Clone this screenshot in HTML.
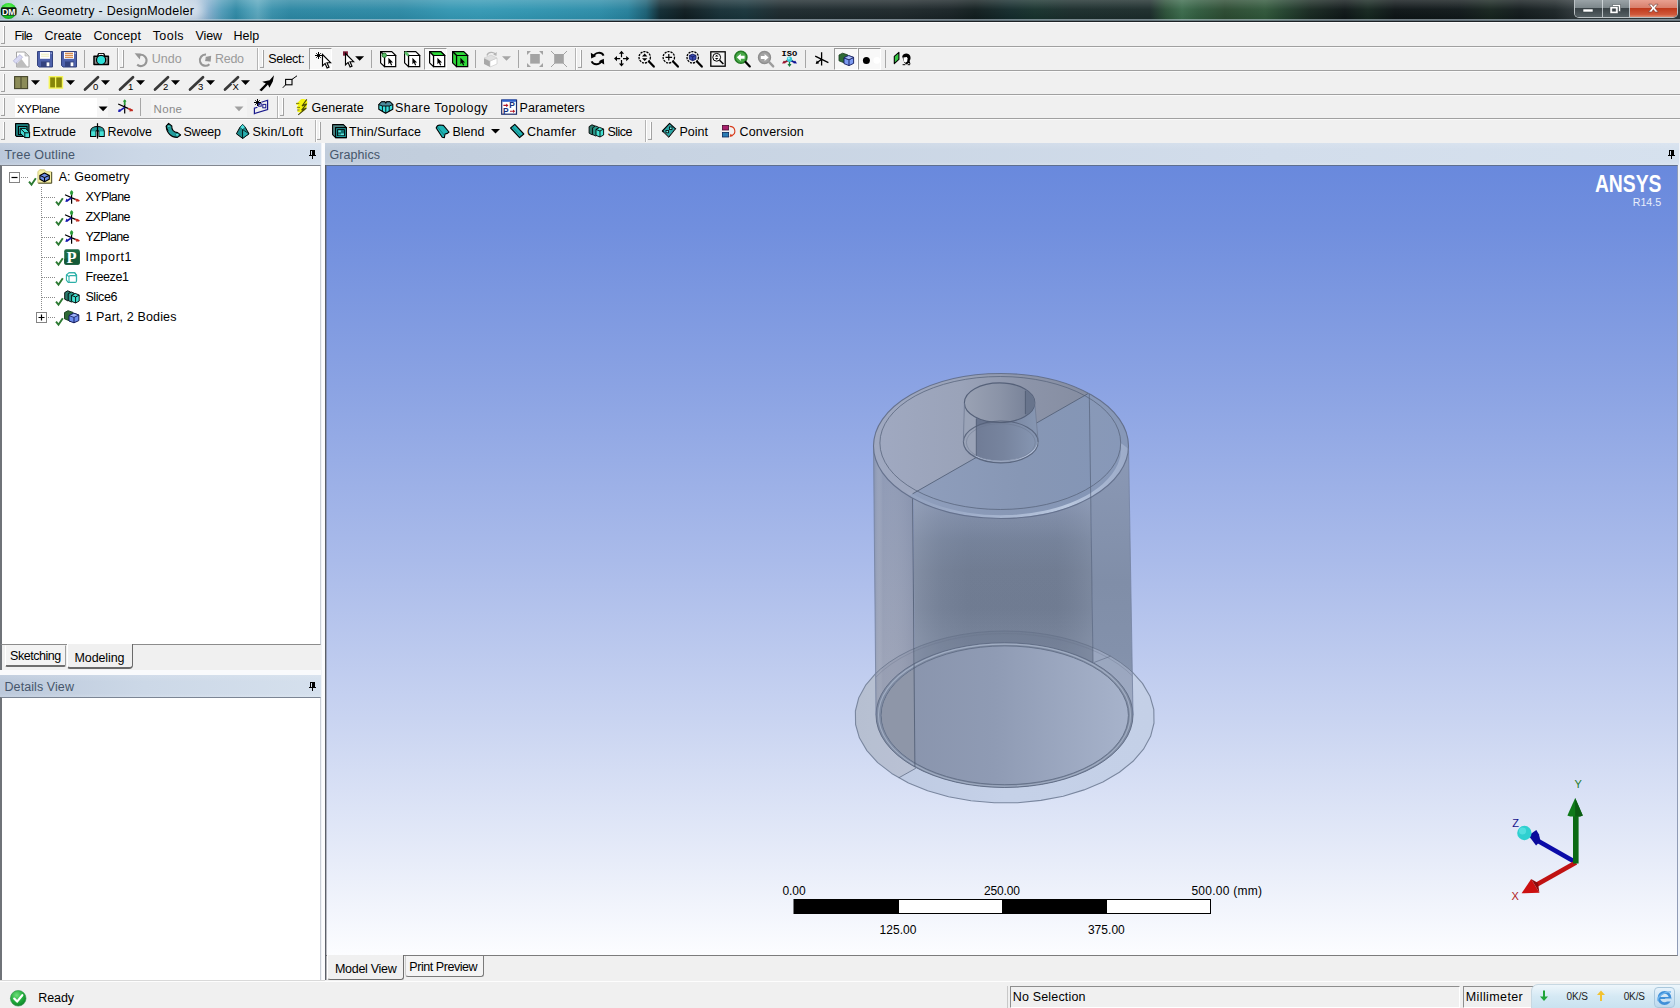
<!DOCTYPE html>
<html lang="en">
<head>
<meta charset="utf-8">
<title>A: Geometry - DesignModeler</title>
<style>
html,body{margin:0;padding:0;}
body{width:1680px;height:1008px;overflow:hidden;background:#f0f0f0;font-family:"Liberation Sans",sans-serif;position:relative;}
#app{position:absolute;left:0;top:0;width:1680px;height:1008px;overflow:hidden;background:#f0f0f0;}
.t{position:absolute;white-space:pre;line-height:16px;height:16px;font-family:"Liberation Sans",sans-serif;}
.a{position:absolute;}
.hl{position:absolute;left:0;width:1680px;height:1px;}
.grip{position:absolute;width:4px;height:18px;border-right:1px solid #a2a2a2;border-bottom:1px solid #a2a2a2;box-sizing:border-box;}
.grip:before{content:"";position:absolute;right:0;top:0;width:1px;height:16px;background:#fff;}
.vsep{position:absolute;width:1px;height:18px;background:#a6a6a6;}
.tbend{position:absolute;width:1px;height:22px;background:#b4b4b4;box-shadow:1px 0 0 #fff;}
.pressed{position:absolute;box-sizing:border-box;border:1px solid;border-color:#9a9a9a #fff #fff #9a9a9a;background:#f8f8f8;}
.phead{position:absolute;height:22px;background:linear-gradient(180deg,rgba(255,255,255,.12),rgba(255,255,255,0) 30%,rgba(255,255,255,0) 85%,rgba(255,255,255,.15)),linear-gradient(90deg,#bcc9db 0%,#ccd8e7 45%,#d5e0ed 100%);}
.white{position:absolute;background:#fff;}
svg{position:absolute;overflow:visible;}
</style>
</head>
<body>
<div id="app">
<!-- ===== title bar (aero glass over wallpaper) ===== -->
<div class="a" id="titlebar" style="left:0;top:0;width:1680px;height:21px;background:
 linear-gradient(180deg,rgba(255,255,255,.2) 0%,rgba(255,255,255,.04) 45%,rgba(0,0,0,.05) 100%),
 linear-gradient(90deg,#a9c3ce 0px,#c0d2dc 14px,#c9d8e1 90px,#c6d6e0 170px,#b3c6dc 196px,#86b0cf 208px,#4f9bb8 222px,#2d88a4 236px,#4a9db6 250px,#5aa6bd 258px,#3790ab 272px,#2a86a2 290px,#2b89a5 400px,#3296b2 450px,#3398b4 480px,#2f94b0 530px,#2b8ca8 600px,#247f9a 628px,#1a5f74 646px,#0f2a32 660px,#0d1a1e 685px,#152e35 720px,#17333a 745px,#1b282c 780px,#1c2629 900px,#172124 950px,#0f1b1c 975px,#12292a 1010px,#15302b 1035px,#192b2a 1070px,#1a2a29 1150px,#2a5037 1166px,#39694a 1182px,#2f5a3d 1198px,#29482f 1225px,#2e5538 1265px,#21402c 1285px,#16271f 1310px,#0c1415 1345px,#13241d 1368px,#0b1214 1395px,#0e1618 1460px,#14221c 1490px,#10181a 1520px,#1a2325 1555px,#2b3437 1573px,#30393c 1680px);"></div>
<div class="a" style="left:14px;top:2px;width:190px;height:17px;border-radius:9px;background:rgba(235,242,247,.55);filter:blur(5px)"></div>
<div class="hl" style="top:19px;background:rgba(200,215,225,.55)"></div>
<div class="hl" style="top:20px;background:rgba(120,135,145,.8)"></div>
<div class="hl" style="top:21px;background:#1d2226"></div>
<div class="hl" style="top:22px;background:#fbfbfb"></div>
<!-- window buttons -->
<div class="a" style="left:1574px;top:0;width:104px;height:18px;border:1px solid rgba(235,240,245,.75);border-top:none;border-radius:0 0 5px 5px;box-sizing:border-box;background:#30383b;overflow:hidden">
  <div class="a" style="left:0;top:0;width:27px;height:17px;background:linear-gradient(180deg,#9aa3a7 0%,#7d878b 45%,#3a4347 50%,#566064 100%);border-right:1px solid rgba(230,235,240,.7)"></div>
  <div class="a" style="left:28px;top:0;width:26px;height:17px;background:linear-gradient(180deg,#9aa3a7 0%,#7d878b 45%,#3a4347 50%,#566064 100%);border-right:1px solid rgba(230,235,240,.7)"></div>
  <div class="a" style="left:55px;top:0;width:48px;height:17px;background:linear-gradient(180deg,#e8a090 0%,#d9806c 45%,#c03a1c 50%,#d0583a 85%,#e08c70 100%)"></div>
</div>
<svg style="left:1574px;top:0" width="104" height="18" viewBox="0 0 104 18">
  <rect x="9" y="9" width="10" height="3" fill="#fff" stroke="#3b4347" stroke-width=".6"/>
  <path d="M38.5 4.5h8v7h-2v-5h-6z" fill="#fff" stroke="#3b4347" stroke-width=".5"/>
  <path d="M36 6.5h8v7h-8z M38.3 8.8v2.5h3.4v-2.5z" fill="#fff" fill-rule="evenodd" stroke="#3b4347" stroke-width=".5"/>
  <path d="M74.800 4.200l2.900 0 1.700 2.300 1.700-2.300 2.900 0-3.100 3.800 3.300 4-3 0-1.800-2.400-1.800 2.400-3 0 3.300-4z" fill="#fff" stroke="#6b3a36" stroke-width=".6"/>
</svg>
<!-- DM icon -->
<svg style="left:0;top:2px" width="18" height="18" viewBox="0 0 18 18">
  <defs><radialGradient id="dmg" cx=".5" cy=".35" r=".7"><stop offset="0" stop-color="#7dff6a"/><stop offset=".6" stop-color="#22d62a"/><stop offset="1" stop-color="#0c9a1c"/></radialGradient></defs>
  <circle cx="8.5" cy="9" r="8" fill="url(#dmg)"/>
  <rect x="1" y="5.2" width="15.5" height="8.4" rx="1.5" fill="#0a1a0a"/>
  <text x="8.7" y="12.6" font-family="Liberation Sans, sans-serif" font-weight="bold" font-size="8.6" fill="#fff" text-anchor="middle" textLength="13.5" lengthAdjust="spacingAndGlyphs">DM</text>
</svg>

<!-- ===== menu + toolbars separators ===== -->
<div class="hl" style="top:46px;background:#a0a0a0"></div><div class="hl" style="top:47px;background:#fafafa"></div>
<div class="hl" style="top:70px;background:#a0a0a0"></div><div class="hl" style="top:71px;background:#fafafa"></div>
<div class="hl" style="top:94px;background:#a0a0a0"></div><div class="hl" style="top:95px;background:#fafafa"></div>
<div class="hl" style="top:118px;background:#a0a0a0"></div><div class="hl" style="top:119px;background:#fafafa"></div>

<!-- grippers -->
<div class="grip" style="left:1px;top:26px"></div>
<div class="grip" style="left:1px;top:50px"></div>
<div class="grip" style="left:120px;top:50px"></div>
<div class="grip" style="left:260px;top:50px"></div>
<div class="grip" style="left:578px;top:50px"></div>
<div class="grip" style="left:1px;top:74px"></div>
<div class="grip" style="left:1px;top:98px"></div>
<div class="grip" style="left:280px;top:98px"></div>
<div class="grip" style="left:1px;top:122px"></div>
<div class="grip" style="left:317px;top:122px"></div>
<div class="grip" style="left:648px;top:122px"></div>
<!-- toolbar ends -->
<div class="tbend" style="left:117px;top:48px"></div>
<div class="tbend" style="left:257px;top:48px"></div>
<div class="tbend" style="left:575px;top:48px"></div>
<div class="tbend" style="left:277px;top:96px"></div>
<div class="tbend" style="left:315px;top:120px"></div>
<div class="tbend" style="left:645px;top:120px"></div>
<!-- small separators -->
<div class="vsep" style="left:84px;top:50px"></div>
<div class="vsep" style="left:371px;top:50px"></div>
<div class="vsep" style="left:475px;top:50px"></div>
<div class="vsep" style="left:518px;top:50px"></div>
<div class="vsep" style="left:805px;top:50px"></div>
<div class="vsep" style="left:885px;top:50px"></div>
<div class="vsep" style="left:140px;top:98px"></div>
<!-- pressed buttons -->
<div class="pressed" style="left:309px;top:48px;width:23px;height:22px"></div>
<div class="pressed" style="left:424px;top:48px;width:23px;height:22px"></div>
<div class="pressed" style="left:834px;top:48px;width:24px;height:22px"></div>
<div class="pressed" style="left:858px;top:48px;width:23px;height:22px"></div>
<!-- combos -->
<div class="white" style="left:15px;top:98px;width:82px;height:19px"></div>
<div class="a" style="left:97px;top:98px;width:11px;height:19px;background:#f6f6f6"></div>
<div class="a" style="left:151px;top:98px;width:96px;height:19px;background:#f4f4f4"></div>

<!-- ===== panels ===== -->
<div class="a" style="left:0;top:143px;width:1680px;height:838px;background:#eef2f8"></div>
<div class="phead" style="left:0;top:143px;width:321px"></div>
<div class="phead" style="left:325px;top:143px;width:1354px;background:linear-gradient(180deg,rgba(255,255,255,.12),rgba(255,255,255,0) 30%,rgba(255,255,255,0) 85%,rgba(255,255,255,.15)),linear-gradient(90deg,#c0ccdb 0%,#c7d3e2 25%,#d2ddeb 70%,#d6e1ee 100%)"></div>
<div class="a" style="left:321px;top:143px;width:4px;height:838px;background:linear-gradient(90deg,#e9edf3,#fdfdfe 35%,#fafbfd)"></div>
<!-- tree panel -->
<div class="a" style="left:0;top:165px;width:321px;height:480px;background:#fff;border:1px solid #828790;border-left:2px solid #6f7378;border-right-color:#c9ced6;border-bottom-color:#8c8c8c;box-sizing:border-box"></div>
<div class="a" style="left:0;top:645px;width:321px;height:25px;background:#f0f0f0;border-left:2px solid #6f7378;box-sizing:border-box"></div>
<div class="a" style="left:0;top:670px;width:321px;height:5px;background:#f9fafc"></div>
<!-- tabs -->
<div class="a" style="left:5px;top:645px;width:61px;height:22px;background:#f3f3f3;border:1px solid;border-color:#f3f3f3 #a0a0a0 #6e6e6e #fff;border-bottom-width:2px;box-sizing:border-box;border-radius:0 0 2px 2px"></div>
<div class="a" style="left:67px;top:644px;width:66px;height:25px;background:#f0f0f0;border:1px solid;border-color:#f0f0f0 #6a6a6a #6a6a6a #fff;border-bottom-width:2px;border-top:none;box-sizing:border-box;border-radius:0 0 4px 3px"></div>
<!-- details -->
<div class="phead" style="left:0;top:675px;width:321px"></div>
<div class="a" style="left:0;top:697px;width:321px;height:284px;background:#fff;border:1px solid #828790;border-left:2px solid #6f7378;border-right-color:#c9ced6;border-bottom-color:#c9ced6;box-sizing:border-box;border-top:1px solid #7b8594"></div>
<!-- pins -->
<svg style="left:309px;top:149px" width="7" height="10" viewBox="0 0 7 10"><path d="M1 1h5v5h1v1H4v3H3V7H0V6h1z M2 2v4h1V2z" fill="#000" fill-rule="evenodd" shape-rendering="crispEdges"/></svg>
<svg style="left:309px;top:681px" width="7" height="10" viewBox="0 0 7 10"><path d="M1 1h5v5h1v1H4v3H3V7H0V6h1z M2 2v4h1V2z" fill="#000" fill-rule="evenodd" shape-rendering="crispEdges"/></svg>
<svg style="left:1668px;top:149px" width="7" height="10" viewBox="0 0 7 10"><path d="M1 1h5v5h1v1H4v3H3V7H0V6h1z M2 2v4h1V2z" fill="#000" fill-rule="evenodd" shape-rendering="crispEdges"/></svg>

<!-- ===== status bar ===== -->
<div class="a" style="left:0;top:981px;width:1680px;height:27px;background:#f0f0f0"></div>
<div class="hl" style="top:980px;background:#d9d9d9"></div>
<div class="hl" style="top:981px;background:#fdfdfd"></div>
<div class="a" style="left:1007px;top:986px;width:1px;height:22px;background:#c8c8c8"></div>
<div class="a" style="left:1010px;top:986px;width:450px;height:22px;border:1px solid;border-color:#8e8e8e #fff #fff #8e8e8e;box-sizing:border-box"></div>
<div class="a" style="left:1463px;top:986px;width:80px;height:22px;border:1px solid;border-color:#8e8e8e #fff #fff #8e8e8e;box-sizing:border-box"></div>
<svg style="left:10px;top:990px" width="17" height="17" viewBox="0 0 17 17">
  <defs><radialGradient id="okg" cx=".4" cy=".3" r=".8"><stop offset="0" stop-color="#6fe07a"/><stop offset=".55" stop-color="#1faa3a"/><stop offset="1" stop-color="#0b7a26"/></radialGradient></defs>
  <circle cx="8.2" cy="8.3" r="7.8" fill="url(#okg)" stroke="#2c8c45" stroke-width=".6"/>
  <path d="M4.2 8.6l2.9 3 5.2-6.4" fill="none" stroke="#fff" stroke-width="2.2" stroke-linecap="round" stroke-linejoin="round"/>
</svg>
<!-- net speed widget -->
<div class="a" style="left:1531px;top:984px;width:152px;height:30px;border-radius:7px 0 0 0;background:linear-gradient(180deg,#eef6fb 0%,#d5e9f4 40%,#c4dfee 100%);border:1px solid #c7d8e2;box-sizing:border-box"></div>
<svg style="left:1538px;top:990px" width="12" height="12" viewBox="0 0 12 12"><path d="M5 0.5h2v6h3l-4 4.5-4-4.5h3z" fill="#21a53a"/></svg>
<svg style="left:1595px;top:990px" width="12" height="12" viewBox="0 0 12 12"><path d="M5 11h2v-6h3l-4-4.5-4 4.5h3z" fill="#f2c230"/></svg>
<div class="a" style="left:1654px;top:987px;width:21px;height:21px;border-radius:4px;background:linear-gradient(180deg,#e6f2fb,#bcd9ee);border:1px solid #a9c7dc;box-sizing:border-box"></div>
<svg style="left:1656px;top:989px" width="17" height="17" viewBox="0 0 17 17">
  <circle cx="8.5" cy="9" r="5.6" fill="none" stroke="#3f8fd8" stroke-width="2.6"/>
  <rect x="4" y="8" width="10" height="2" fill="#3f8fd8"/>
  <path d="M9 9.6h6v3h-4z" fill="#c9e0f2"/>
  <path d="M2 12c-1-4 6-10 13-9" fill="none" stroke="#6db4ee" stroke-width="1.3"/>
</svg>
<!-- ===== graphics viewport ===== -->
<div class="a" id="viewport" style="left:325px;top:165px;width:1353px;height:791px;box-sizing:border-box;border:1px solid #5e6f8f;border-right-color:#8f9bb5;border-bottom-color:#7c7c7c;background:linear-gradient(180deg,#6989dd 0%,#718fde 8%,#8ba3e3 28%,#aabbea 50%,#c9d4f1 70%,#e7ecf9 88%,#fcfdff 100%)"></div>
<!-- bottom tabs -->
<div class="a" style="left:325px;top:956px;width:1355px;height:25px;background:#f0f0f0"></div>
<div class="a" style="left:327px;top:955px;width:77px;height:25px;background:#f0f0f0;border:1px solid;border-color:#f0f0f0 #6e6e6e #6e6e6e #fff;border-top:none;box-sizing:border-box;border-radius:0 0 3px 3px"></div>
<div class="a" style="left:405px;top:956px;width:79px;height:21px;background:#f4f4f4;border:1px solid;border-color:#fff #7a7a7a #7a7a7a #cfcfcf;border-top:none;box-sizing:border-box;border-radius:0 0 3px 3px"></div>
<div class="a" style="left:325px;top:165px;width:1px;height:815px;background:#5c6068"></div><div class="a" style="left:326px;top:166px;width:1px;height:814px;background:rgba(92,96,104,.4)"></div>
<svg style="left:0;top:0" width="1680" height="1008" viewBox="0 0 1680 1008">
  <!-- logo -->
  <text x="1594.9" y="191.9" font-family="Liberation Sans, sans-serif" font-weight="bold" font-size="23.3" fill="#fff" textLength="66.6" lengthAdjust="spacingAndGlyphs">ANSYS</text>
  <text x="1632.7" y="205.7" font-family="Liberation Sans, sans-serif" font-size="10.5" fill="#e9eefb" textLength="28.5" lengthAdjust="spacingAndGlyphs">R14.5</text>
  <!-- scale bar -->
  <rect x="794" y="899.5" width="416.5" height="14" fill="#fff" stroke="#000" stroke-width="1"/>
  <rect x="794" y="899.5" width="105" height="14" fill="#000"/>
  <rect x="1002" y="899.5" width="105" height="14" fill="#000"/>
  <!-- triad -->
  <g id="triad">
    <line x1="1576" y1="862.4" x2="1536" y2="839.8" stroke="#0b0ba8" stroke-width="4.6"/>
    <path d="M1528.5 835.5l7.8-5.6 2.6 4.4 1.6 6.6-4.4 4.6z" fill="#0a0a9c"/>
    <circle cx="1524.4" cy="833" r="7.2" fill="#2fd0d0"/>
    <circle cx="1522.6" cy="831" r="3.6" fill="#5fe6e6" opacity=".7"/>
    <line x1="1576" y1="862.4" x2="1536" y2="885" stroke="#c01212" stroke-width="4.6"/>
    <path d="M1521.6 893.3l9.6-14.2 8.2 13.6z" fill="#cc1010"/>
    <path d="M1531.2 879.1l8.2 13.6-1.4-9.8z" fill="#8e0c0c"/>
    <rect x="1573" y="814" width="5.6" height="49.5" fill="#0b6a14"/>
    <path d="M1575.2 798l7.6 17.4c-2 1.6-13.4 1.6-15.4 0z" fill="#0f7a1a"/>
    <path d="M1575.2 798l7.6 17.4c-1 .8-4 1.2-7.6 1.2z" fill="#0a5c12"/>
    <text x="1574.6" y="788.4" font-family="Liberation Sans, sans-serif" font-size="11" fill="#1f7a2a">Y</text>
    <text x="1512.3" y="826.6" font-family="Liberation Sans, sans-serif" font-size="11" fill="#14148c">Z</text>
    <text x="1511.6" y="899.6" font-family="Liberation Sans, sans-serif" font-size="11" fill="#b02020">X</text>
  </g>
</svg>
<!-- ===== 3D model ===== -->
<svg style="left:0;top:0" width="1680" height="1008" viewBox="0 0 1680 1008">
<defs>
  <clipPath id="cBody"><path d="M873.5 446A127.5 72.5 0 0 1 1128.5 446L1133 715.1A128.5 72.4 0 0 1 876 715.1Z"/></clipPath>
  <clipPath id="cLid"><ellipse cx="1001" cy="446" rx="127.5" ry="72.5"/></clipPath>
  <clipPath id="cFlange"><path d="M1154.0 723.0L1150.6 736.3L1143.5 749.2L1133.0 761.3L1119.4 772.3L1102.9 781.9L1084.0 789.9L1063.2 796.2L1040.9 800.4L1017.7 802.7L994.3 802.8L971.0 800.8L948.6 796.7L927.6 790.7L908.5 782.9L891.7 773.4L877.7 762.6L866.9 750.6L859.4 737.8L855.6 724.5L855.4 711.0L858.8 697.7L865.9 684.8L876.4 672.7L890.0 661.7L906.5 652.1L925.4 644.1L946.2 637.8L968.5 633.6L991.7 631.3L1015.1 631.2L1038.4 633.2L1060.8 637.3L1081.8 643.3L1100.9 651.1L1117.7 660.6L1131.7 671.4L1142.5 683.4L1150.0 696.2L1153.8 709.5Z"/></clipPath>
  <clipPath id="cLeft"><path d="M860 360H912.6L914.9 820H860Z"/></clipPath>
  <clipPath id="cMid"><path d="M912.6 360H1089.2L1095 820H915.6Z"/></clipPath>
  <clipPath id="cRight"><path d="M1089.2 360h70v460h-64.2z"/></clipPath>
  <linearGradient id="gLeft" x1="0" y1="446" x2="0" y2="790" gradientUnits="userSpaceOnUse">
    <stop offset="0" stop-color="#8b97b4"/><stop offset=".3" stop-color="#919bb4"/><stop offset=".55" stop-color="#979fb5"/><stop offset=".72" stop-color="#9ca3b7"/><stop offset="1" stop-color="#9098aa"/>
  </linearGradient>
  <linearGradient id="gLeftH" x1="874" y1="0" x2="914" y2="0" gradientUnits="userSpaceOnUse">
    <stop offset="0" stop-color="#7f8dac" stop-opacity=".4"/><stop offset=".22" stop-color="#fff" stop-opacity=".03"/><stop offset="1" stop-color="#6b7690" stop-opacity=".16"/>
  </linearGradient>
  <linearGradient id="gMidV" x1="0" y1="500" x2="0" y2="650" gradientUnits="userSpaceOnUse">
    <stop offset="0" stop-color="#8795b0"/><stop offset=".12" stop-color="#7f8ca6"/><stop offset=".27" stop-color="#75829a"/><stop offset=".47" stop-color="#707c92"/><stop offset=".72" stop-color="#6f7b91"/><stop offset="1" stop-color="#7a869c"/>
  </linearGradient>
  <linearGradient id="gMidH" x1="914" y1="0" x2="1092" y2="0" gradientUnits="userSpaceOnUse">
    <stop offset="0" stop-color="#aab4c8" stop-opacity=".34"/><stop offset=".16" stop-color="#9aa5bb" stop-opacity=".14"/><stop offset=".32" stop-color="#8f9bb2" stop-opacity=".02"/><stop offset=".8" stop-color="#8f9bb2" stop-opacity=".02"/><stop offset="1" stop-color="#a3b0c8" stop-opacity=".24"/>
  </linearGradient>
  <linearGradient id="gRight" x1="0" y1="446" x2="0" y2="720" gradientUnits="userSpaceOnUse">
    <stop offset="0" stop-color="#8b99b6"/><stop offset=".5" stop-color="#808ea8"/><stop offset=".75" stop-color="#8391ab"/><stop offset="1" stop-color="#8a97b0"/>
  </linearGradient>
  <linearGradient id="gFloor" x1="880" y1="0" x2="1134" y2="0" gradientUnits="userSpaceOnUse">
    <stop offset="0" stop-color="#8893ab"/><stop offset=".45" stop-color="#8f9bb4"/><stop offset="1" stop-color="#a8b4cc"/>
  </linearGradient>
  <linearGradient id="gLidL" x1="875" y1="0" x2="1090" y2="0" gradientUnits="userSpaceOnUse">
    <stop offset="0" stop-color="#a0a9c1"/><stop offset=".4" stop-color="#9aa3b9"/><stop offset=".7" stop-color="#8c94a9"/><stop offset="1" stop-color="#858da1"/>
  </linearGradient>
  <linearGradient id="gLidR" x1="915" y1="0" x2="1125" y2="0" gradientUnits="userSpaceOnUse">
    <stop offset="0" stop-color="#8f9ebc"/><stop offset=".5" stop-color="#8797b5"/><stop offset="1" stop-color="#8395b6"/>
  </linearGradient>
  <linearGradient id="gPipeIn" x1="965" y1="0" x2="1036" y2="0" gradientUnits="userSpaceOnUse">
    <stop offset="0" stop-color="#9aa2b4"/><stop offset=".5" stop-color="#8a93a7"/><stop offset=".85" stop-color="#7a849a"/><stop offset="1" stop-color="#727d95"/>
  </linearGradient>
  <linearGradient id="gPipeFr" x1="976" y1="0" x2="1038" y2="0" gradientUnits="userSpaceOnUse">
    <stop offset="0" stop-color="#707c96"/><stop offset=".45" stop-color="#77849e"/><stop offset="1" stop-color="#8797b3"/>
  </linearGradient>
  <linearGradient id="gFlange" x1="855" y1="0" x2="1155" y2="0" gradientUnits="userSpaceOnUse">
    <stop offset="0" stop-color="#bcc8e0"/><stop offset=".5" stop-color="#c5d1e8"/><stop offset="1" stop-color="#c4d0e7"/>
  </linearGradient>
  <linearGradient id="gBand" x1="905" y1="0" x2="1130" y2="0" gradientUnits="userSpaceOnUse">
    <stop offset="0" stop-color="#a4b2cc" stop-opacity=".25"/><stop offset=".3" stop-color="#aebcd6" stop-opacity=".6"/><stop offset=".72" stop-color="#bac8df" stop-opacity="1"/><stop offset="1" stop-color="#a9b7d3" stop-opacity=".6"/>
  </linearGradient>
</defs>

<!-- flange disc (faceted) -->
<path d="M1154.0 723.0L1150.6 736.3L1143.5 749.2L1133.0 761.3L1119.4 772.3L1102.9 781.9L1084.0 789.9L1063.2 796.2L1040.9 800.4L1017.7 802.7L994.3 802.8L971.0 800.8L948.6 796.7L927.6 790.7L908.5 782.9L891.7 773.4L877.7 762.6L866.9 750.6L859.4 737.8L855.6 724.5L855.4 711.0L858.8 697.7L865.9 684.8L876.4 672.7L890.0 661.7L906.5 652.1L925.4 644.1L946.2 637.8L968.5 633.6L991.7 631.3L1015.1 631.2L1038.4 633.2L1060.8 637.3L1081.8 643.3L1100.9 651.1L1117.7 660.6L1131.7 671.4L1142.5 683.4L1150.0 696.2L1153.8 709.5Z" fill="url(#gFlange)"/>
<g clip-path="url(#cFlange)"><path d="M898.8 777.8L883.6 767.5L871.3 756.0L862.3 743.6L856.8 730.5L855.0 717.0L856.8 703.5L862.3 690.4L871.3 678.0L883.6 666.5L898.8 656.2L916.7 647.4L936.7 640.4L958.4 635.2L981.3 632.1L1004.7 631.0L1028.1 632.1L1051.0 635.2L1072.7 640.4L1092.7 647.4L1110.6 656.2Z" fill="#a8a8ac" fill-opacity=".28"/></g>
<path d="M1154.0 723.0L1150.6 736.3L1143.5 749.2L1133.0 761.3L1119.4 772.3L1102.9 781.9L1084.0 789.9L1063.2 796.2L1040.9 800.4L1017.7 802.7L994.3 802.8L971.0 800.8L948.6 796.7L927.6 790.7L908.5 782.9L891.7 773.4L877.7 762.6L866.9 750.6L859.4 737.8L855.6 724.5L855.4 711.0L858.8 697.7L865.9 684.8L876.4 672.7L890.0 661.7L906.5 652.1L925.4 644.1L946.2 637.8L968.5 633.6L991.7 631.3L1015.1 631.2L1038.4 633.2L1060.8 637.3L1081.8 643.3L1100.9 651.1L1117.7 660.6L1131.7 671.4L1142.5 683.4L1150.0 696.2L1153.8 709.5Z" fill="none" stroke="#7a879f" stroke-width="1.1" stroke-linejoin="round"/>

<!-- body -->
<g clip-path="url(#cBody)">
  <g clip-path="url(#cLeft)"><rect x="860" y="360" width="300" height="460" fill="url(#gLeft)"/><rect x="860" y="360" width="300" height="460" fill="url(#gLeftH)"/></g>
  <g clip-path="url(#cMid)"><rect x="860" y="360" width="300" height="460" fill="url(#gMidV)"/><rect x="860" y="360" width="300" height="460" fill="url(#gMidH)"/></g>
  <g clip-path="url(#cRight)"><rect x="860" y="360" width="300" height="460" fill="url(#gRight)"/></g>
  <!-- flange seen through body -->
  <g clip-path="url(#cMid)"><path d="M855 717A149.7 86 0 0 1 1154.4 717L1154.4 800L855 800Z" fill="#5f6a80" fill-opacity=".16"/></g>
  <g clip-path="url(#cRight)"><path d="M855 717A149.7 86 0 0 1 1154.4 717L1154.4 800L855 800Z" fill="#c9d4ea" fill-opacity=".32"/></g>
  <g clip-path="url(#cLeft)"><path d="M855 717A149.7 86 0 0 1 1154.4 717L1154.4 800L855 800Z" fill="#7b8398" fill-opacity=".14"/></g>
  <path d="M855 717A149.7 86 0 0 1 1154.4 717" fill="none" stroke="#667288" stroke-opacity=".75" stroke-width="1"/>
  <path d="M858 717A146.7 83.5 0 0 1 1151.4 717" fill="none" stroke="#667288" stroke-opacity=".3" stroke-width="1"/>
</g>
<!-- floor -->
<ellipse cx="1004.5" cy="715.1" rx="128.5" ry="72.4" fill="#7f8ba2" stroke="#5f6c84" stroke-opacity=".9" stroke-width="1"/>
<ellipse cx="1004.5" cy="715.1" rx="126" ry="71" fill="none" stroke="#aab6cc" stroke-opacity=".8" stroke-width="1.2"/>
<ellipse cx="1004.8" cy="715.3" rx="123.6" ry="69.4" fill="url(#gFloor)" stroke="#5f6c84" stroke-opacity=".85" stroke-width="1"/>
<g clip-path="url(#cLeft)"><ellipse cx="1004.8" cy="715.3" rx="123.1" ry="68.9" fill="#8e96a8"/></g>

<!-- body outline -->
<path d="M873.5 446L876 715.1M1133 715.1L1128.5 446" fill="none" stroke="#7482a0" stroke-opacity=".8" stroke-width="1"/>
<!-- slice lines on body -->
<path d="M912.6 493.8L914.9 767" stroke="#4e5a70" stroke-opacity=".8" stroke-width="1" fill="none"/>
<path d="M898.8 777.8L915.8 768.3" stroke="#5d6982" stroke-opacity=".75" stroke-width="1" fill="none"/>
<path d="M1094 662.5L1110.6 656.2" stroke="#5d6982" stroke-opacity=".6" stroke-width="1" fill="none"/>

<!-- lid -->
<ellipse cx="1001" cy="446" rx="127.5" ry="72.5" fill="#8d9bb8"/>
<g clip-path="url(#cLid)">
  <path d="M860 524L912.6 493.8L1087.9 393.7L1150 358L860 358Z" fill="url(#gLidL)"/>
  <path d="M912.6 493.8L1087.9 393.7L1150 393.7L1150 530L860 530Z" fill="url(#gLidR)"/>
  <path d="M1089.3 393.7L1091 530L1150 530L1150 393.7Z" fill="#8c9cba" fill-opacity=".5"/>
</g>
<!-- fillet band highlight -->
<path d="M905 489A120.4 66.5 0 0 0 1120.7 443A127.5 72.5 0 0 1 1128.5 449A127.5 72.5 0 0 1 912 497.5Z" fill="url(#gBand)"/>
<ellipse cx="1000.3" cy="443" rx="120.4" ry="66.5" fill="none" stroke="#5a667e" stroke-opacity=".8" stroke-width="1"/>
<ellipse cx="1001" cy="446" rx="127.5" ry="72.5" fill="none" stroke="#606d88" stroke-opacity=".9" stroke-width="1.1"/>
<path d="M912.6 493.8L1087.9 393.7" stroke="#4f5b72" stroke-opacity=".8" stroke-width="1" fill="none"/>
<path d="M1089.3 394L1093 662.5" stroke="#56627a" stroke-opacity=".7" stroke-width="1" fill="none"/>

<!-- pipe -->
<path d="M964.4 403L963.4 442A37.4 21 0 0 0 1038.2 442L1034.8 403A35.2 19.8 0 0 0 964.4 403Z" fill="url(#gPipeFr)"/>
<path d="M964.4 403L963.4 442A37.4 21 0 0 0 976.3 456.6L976.3 418A35.2 19.8 0 0 1 964.4 403Z" fill="#9aa3b7"/>
<ellipse cx="999.6" cy="402.7" rx="35.2" ry="19.8" fill="url(#gPipeIn)" stroke="#525e76" stroke-opacity=".95" stroke-width="1.1"/>
<path d="M1025.4 389.5L1025.4 415.5A35.2 19.8 0 0 0 1034.8 402.7A35.2 19.8 0 0 0 1025.4 389.5Z" fill="#68748c"/>
<path d="M976.3 418.4l15 5.2-15 2z" fill="#65718a" fill-opacity=".7"/>
<path d="M975 455.5A37.4 21 0 0 0 1038.2 442" fill="none" stroke="#b4c0d8" stroke-width="1.3"/>
<ellipse cx="1000.8" cy="442" rx="37.4" ry="21" fill="none" stroke="#525e76" stroke-opacity=".85" stroke-width="1.1"/>
<ellipse cx="1000.8" cy="442.4" rx="34.4" ry="18.8" fill="none" stroke="#6c7890" stroke-opacity=".5" stroke-width="1"/>
<path d="M964.4 403L963.4 442M1034.8 403L1038.2 442" stroke="#6c7890" stroke-opacity=".7" stroke-width="1"/>
<path d="M976.3 418.5L976.3 456M1025.4 391L1025.4 414" stroke="#4e5a70" stroke-opacity=".8" stroke-width="1"/>
</svg>
<!-- ===== toolbar icons row 1 ===== -->
<svg style="left:0;top:0" width="1680" height="160" viewBox="0 0 1680 160">
<defs>
  <path id="ddArrow" d="M0 0h9l-4.5 4.6z"/>
  <g id="cursorW"><path d="M0 0v11.400l2.600-2.500 2 4.600 1.900-.8-2-4.500h3.600z" fill="#fff" stroke="#000" stroke-width="1.150" stroke-linejoin="miter"/></g>
  <g id="cursorB"><path d="M0 0v6.400l1.500-1.400 1.200 2.700 1.100-.5-1.200-2.600h2.100z" fill="#000"/></g>
  <g id="cubeWire">
    <path d="M4.5 4.5h11.2v11.2H4.5z" fill="#fff" stroke="#000" stroke-width="1.2"/>
    <path d="M4.5 4.5L.6.6h11.2l3.9 3.9z" fill="#fff" stroke="#000" stroke-width="1.2" stroke-linejoin="round"/>
    <path d="M.6.6v11.2l3.9 3.9V4.5z" fill="#fff" stroke="#000" stroke-width="1.2" stroke-linejoin="round"/>
  </g>
  <g id="mag"><circle cx="0" cy="0" r="5.7" fill="#f4f4f4" stroke="#000" stroke-width="1.3" stroke-dasharray="2.2 .9"/><path d="M4.3 4.3l4.8 5" stroke="#000" stroke-width="2.2" stroke-linecap="round"/></g>
</defs>
<!-- new -->
<g transform="translate(13,51)">
  <path d="M3.500 1h8.500l4 4v11H3.500z" fill="#fff" stroke="#9c9c9c" stroke-width=".9"/>
  <path d="M12 1v4h4z" fill="#d6d6d6" stroke="#a8a8a8" stroke-width=".6"/>
  <path d="M3.5 16v-3l5-5 6 8z" fill="#bdbdbd"/>
  <path d="M.3 9.8L7 3.6l2.6 2.7-6.7 6.2z" fill="#d9daf4" stroke="#a9aad0" stroke-width=".7"/>
</g>
<!-- save -->
<g transform="translate(37,51)">
  <path d="M.5.5h15v15.5H2L.5 14.5z" fill="#4d61ab" stroke="#33427e" stroke-width="1"/>
  <rect x="3" y="1" width="10" height="6.8" fill="#fff"/><path d="M4 3.2h8M4 5.2h8" stroke="#e8e8a8" stroke-width=".8"/>
  <rect x="13.7" y="1.5" width="1" height="1.6" fill="#aab4de"/>
  <rect x="4" y="10.5" width="9" height="5.5" fill="#33427e"/><rect x="9.6" y="11.4" width="2.8" height="3.8" fill="#fff"/>
</g>
<!-- save as -->
<g transform="translate(61,51)">
  <path d="M.5.5h15v15.5H2L.5 14.5z" fill="#4d61ab" stroke="#33427e" stroke-width="1"/>
  <rect x="3" y="1" width="10" height="6.8" fill="#fff"/><path d="M4 2.2h8M4 4.2h8M4 6.2h8" stroke="#c86a1c" stroke-width="1.1"/>
  <rect x="13.7" y="1.5" width="1" height="1.6" fill="#aab4de"/>
  <rect x="4" y="10.5" width="9" height="5.5" fill="#33427e"/><rect x="9.6" y="11.4" width="2.8" height="3.8" fill="#fff"/>
</g>
<!-- camera -->
<g transform="translate(93,53)">
  <path d="M1 3.2h3.6l1-2.4h5.2l1 2.4h3.6v8.4H1z" fill="#8c8c8c" stroke="#000" stroke-width="1.5" stroke-linejoin="round"/>
  <rect x="5.8" y=".9" width="4.6" height="1.6" fill="#fff"/>
  <circle cx="8.1" cy="6.9" r="4.6" fill="#2fe0d8" stroke="#000" stroke-width="1.2"/>
</g>
<!-- undo / redo (disabled) -->
<g fill="none" stroke="#969696" stroke-width="2.100">
  <path d="M139.600 55A5.600 5.600 0 1 1 137.200 64.600"/>
  <path d="M206 54.600A5.600 5.600 0 1 0 209.400 64.200"/>
</g>
<path d="M134.600 53.200l6.200.4-1 5.800z" fill="#969696"/>
<path d="M211.200 55.800l-.6 6-5.800-1.200 2.200-1.600-1.800-2z" fill="#969696"/>
<path d="M205.400 58.200h3.400v3h-3.400z" fill="#969696"/>
<!-- select: new selection -->
<g stroke="#000" stroke-width="1"><path d="M318.500 52v7M315 55.500h7"/><path d="M316.200 53.200l4.600 4.600M320.800 53.200l-4.600 4.600" stroke-width=".9"/></g>
<use href="#cursorW" x="322.500" y="54.500"/>
<!-- select mode -->
<rect x="343" y="51.3" width="4.9" height="4.4" fill="#7a1a35"/>
<use href="#cursorW" x="345.500" y="53.500"/>
<use href="#ddArrow" x="355.1" y="56.2" fill="#000"/>
<!-- selection filter cubes -->
<g transform="translate(380,51)"><use href="#cubeWire"/><use href="#cursorB" x="8.400" y="6.800"/><circle cx="4.3" cy="4.3" r="2.2" fill="#5cc06a" stroke="#1e6a2a" stroke-width=".8"/></g>
<g transform="translate(404,51)"><use href="#cubeWire"/><use href="#cursorB" x="8.400" y="6.800"/><path d="M1 1l3.5 3.5" stroke="#5cc06a" stroke-width="2.6"/></g>
<g transform="translate(429,51)"><use href="#cubeWire"/><path d="M4.5 4.5L.6.6h11.2l3.9 3.9z" fill="#2fd93a" stroke="#000" stroke-width="1.2" stroke-linejoin="round"/><use href="#cursorB" x="8.400" y="6.800"/></g>
<g transform="translate(452,51)"><g fill="#2fd93a"><path d="M4.5 4.5h11.2v11.2H4.5z" stroke="#000" stroke-width="1.2"/><path d="M4.5 4.5L.6.6h11.2l3.9 3.9z" stroke="#000" stroke-width="1.2" stroke-linejoin="round"/><path d="M.6.6v11.2l3.9 3.9V4.5z" stroke="#000" stroke-width="1.2" stroke-linejoin="round"/></g><use href="#cursorB" x="8.400" y="6.800"/></g>
<!-- extend selection (disabled) -->
<g transform="translate(483,51)">
  <path d="M1 7l6 3v6l-6-3z" fill="#a8a8a8"/><path d="M7 10l7-3v6l-7 3z" fill="#fff" stroke="#c4c4c4" stroke-width=".6"/><path d="M1 7l7-3 6 3-7 3z" fill="#e0e0e0" stroke="#c4c4c4" stroke-width=".5"/>
  <path d="M4 4.5C5 .8 11 .4 12.6 3.6" fill="none" stroke="#b4b4b4" stroke-width="1.3"/><path d="M13.8 1l-.4 4-3.2-1.6z" fill="#b4b4b4"/>
</g>
<use href="#ddArrow" x="502" y="56.2" fill="#a6a6a6"/>
<!-- expand / collapse (disabled) -->
<g fill="#a3a3a3">
  <rect x="530.2" y="54" width="9.6" height="9.6"/>
  <path d="M527 51h4l-4 4zM543 51v4l-4-4zM527 67v-4l4 4zM543 67h-4l4-4z"/>
  <rect x="554.2" y="54" width="9.6" height="9.6"/>
</g>
<path d="M551 51l4 4M567 51l-4 4M551 67l4-4M567 67l-4-4" stroke="#a3a3a3" stroke-width="1"/>
<!-- rotate -->
<g fill="none" stroke="#000" stroke-width="1.9">
  <path d="M593.2 57C595 52 601.4 51.4 603.6 55.6"/>
  <path d="M602 60.200C600 65.200 593.600 65.600 591.600 61.400"/>
</g>
<path d="M590.800 52.800l.4 5.600 5-2.400z M604.200 64.400l-.4-5.600-5 2.400z" fill="#000"/>
<!-- pan -->
<g stroke="#000" stroke-width="1.200" fill="#000">
  <path d="M621.500 53v4.200M621.500 60v4.400M616 58.600h4.200M623 58.600h4.400" fill="none"/>
  <path d="M621.500 50.800l2.600 3h-5.200zM621.500 66.400l2.600-3h-5.200zM614 58.600l3-2.600v5.200zM629.200 58.600l-3-2.600v5.200z" stroke="none"/>
</g>
<!-- zoom -->
<use href="#mag" x="644.7" y="57.3"/><path d="M644.7 53.6l2.7 2.8h-5.4zM644.7 61l2.7-2.8h-5.4z" fill="#000"/>
<!-- box zoom -->
<use href="#mag" x="668.8" y="57.3"/><path d="M668.8 54v6.6M665.5 57.3h6.6" stroke="#000" stroke-width="1.2"/>
<!-- zoom to fit -->
<use href="#mag" x="692.7" y="57.3"/>
<path d="M689.4 55.4l3.3-1.3 3.3 1.3v3.8l-3.3 1.5-3.3-1.5z" fill="#3a4ab0" stroke="#10185a" stroke-width=".8"/><path d="M689.4 55.4l3.3 1.4 3.3-1.4M692.7 56.8v3.9" fill="none" stroke="#10185a" stroke-width=".8"/>
<!-- magnifier window -->
<rect x="710.8" y="51.8" width="14.4" height="14.4" fill="#f4f4f4" stroke="#000" stroke-width="1.3"/>
<circle cx="716.7" cy="57.3" r="3.9" fill="#f8f8f8" stroke="#000" stroke-width="1"/><path d="M719.6 60.2l3.8 3.8" stroke="#000" stroke-width="1.6"/>
<path d="M716.7 54.8l1.7 1.8h-3.4zM716.7 59.8l1.7-1.8h-3.4z" fill="#000"/>
<!-- previous view -->
<circle cx="740.900" cy="57.300" r="6" fill="#48a848" stroke="#237a23" stroke-width="1.600"/>
<path d="M745.600 62l4.200 4.400" stroke="#000" stroke-width="2.200" stroke-linecap="round"/>
<path d="M736.800 57.300l4-3.600v2.100h3.800v3h-3.800v2.100z" fill="#fff"/>
<!-- next view (disabled) -->
<circle cx="764.500" cy="57.500" r="6" fill="#a2a2a2" stroke="#8e8e8e" stroke-width="1.400"/>
<path d="M769.200 62.200l4 4.200" stroke="#9c9c9c" stroke-width="2.400" stroke-linecap="round"/>
<path d="M768.600 57.500l-4-3.600v2.100h-3.800v3h3.800v2.100z" fill="#fff"/>
<!-- ISO -->
<text x="781.6" y="55.6" font-family="Liberation Mono, monospace" font-weight="bold" font-size="6.6" fill="#000" textLength="15.6" lengthAdjust="spacingAndGlyphs">ISO</text>
<path d="M789.5 59.5l-6.2 3M789.5 59.5l6.2 3M789.5 59.5v6" stroke-width="1.3" fill="none" stroke="#157a3a"/>
<path d="M789.5 60l-5.4 2.6" stroke="#a01030" stroke-width="1.4"/><path d="M789.5 60l5.4 2.6" stroke="#10109a" stroke-width="1.4"/>
<path d="M782 63.4l3.6-.2-1.6-2.6z" fill="#a01030"/><path d="M797 63.4l-3.6-.2 1.6-2.6z" fill="#10109a"/><path d="M789.5 67l-2-3h4z" fill="#157a3a"/>
<circle cx="789.5" cy="59.2" r="2.7" fill="#35c8d8"/><circle cx="788.8" cy="58.4" r="1.1" fill="#a6f0f4"/>
<!-- display plane -->
<path d="M821.6 52.3v13.2M815.2 56.2l13.2 6.4M821.6 59.3l-5 3.8" stroke="#000" stroke-width="1.3" fill="none"/>
<path d="M815.6 64l1.2-3.4 2.4 2.6z" fill="#000"/>
<!-- display model -->
<g transform="translate(838.6,52.8)">
  <path d="M.4 2.2L4 .4l5 1.6v6.6L5.4 10 .4 8z" fill="#2e6a36" stroke="#143a1a" stroke-width=".8"/>
  <path d="M5.4 5l4.6-2.2 5 1.8v6l-4.6 2.2-5-2z" fill="#7c9af0" stroke="#10185a" stroke-width=".9"/>
  <path d="M5.4 5l5 1.9 4.6-2.3M10.4 6.9v5.9" fill="none" stroke="#10185a" stroke-width=".9"/>
  <path d="M5.4 5l4.6-2.2 5 1.8-4.6 2.3z" fill="#a8bcf8" stroke="#10185a" stroke-width=".7"/>
</g>
<!-- points -->
<circle cx="866.4" cy="60.4" r="3.5" fill="#000"/><circle cx="876.8" cy="60.4" r="3.3" fill="#fff"/>
<!-- look at -->
<path d="M894.3 56.4l4.6-4v7l-4.6 4.2z" fill="#35c843" stroke="#000" stroke-width="1.1" stroke-linejoin="round"/>
<g transform="translate(901.2,53)">
  <path d="M1 3.4C1.600 .6 5.400 -.4 7.600 1.2 10 3 9.600 6.400 8.400 8l1 3.600-1.800-1.600-2.400 1.400-2.200-2z" fill="#000"/>
  <path d="M2.200 4.600l3.400-.6.800 1.600-.4 3-1.800 1.200-1.600-1.400z" fill="#fff"/>
  <path d="M1.400 11.700h2.800M6.400 11.700h2.400" stroke="#000" stroke-width="1"/>
</g>
</svg>
<!-- ===== toolbar icons rows 2-4 ===== -->
<svg style="left:0;top:0" width="1680" height="160" viewBox="0 0 1680 160">
<!-- row 2 -->
<rect x="14.6" y="76.6" width="13" height="12" fill="#8c8c58" stroke="#46462a" stroke-width="1.1"/><path d="M21 76.6v12" stroke="#46462a" stroke-width="1"/>
<use href="#ddArrow" x="31" y="80.3" fill="#000"/>
<rect x="48.6" y="76" width="14.6" height="12.8" fill="#f4f45a"/><rect x="50.2" y="77.4" width="11.6" height="10" fill="#86860a"/><path d="M55.6 77v11" stroke="#f4f45a" stroke-width="1.3"/>
<use href="#ddArrow" x="66" y="80.3" fill="#000"/>
<g stroke="#383838" stroke-width="2.7" stroke-linecap="round">
  <path d="M85 89.6L98 77.2"/><path d="M120 89.6L133 77.2"/><path d="M155 89.6L168 77.2"/><path d="M190 89.6L203 77.2"/><path d="M225 89.6L238 77.2"/>
</g>
<g font-family="Liberation Sans, sans-serif" font-size="9.5" fill="#000" stroke="#f0f0f0" stroke-width="1.6" paint-order="stroke">
  <text x="93" y="90.2">0</text><text x="128" y="90.2">1</text><text x="163" y="90.2">2</text><text x="198" y="90.2">3</text><text x="232.600" y="90.2">X</text>
</g>
<use href="#ddArrow" x="101" y="80.3" fill="#000"/><use href="#ddArrow" x="136" y="80.3" fill="#000"/><use href="#ddArrow" x="171" y="80.3" fill="#000"/><use href="#ddArrow" x="206" y="80.3" fill="#000"/><use href="#ddArrow" x="241" y="80.3" fill="#000"/>
<!-- black dart arrow -->
<path d="M259.4 90l6.400-6.600-3.600-1.600 7.400-1.600 4.400-5-1.200 6.200-3.400 6.400-1.400-3.400-6.400 6.800z" fill="#000"/>
<!-- small box -->
<rect x="285.6" y="79.4" width="6.400" height="5.400" fill="none" stroke="#000" stroke-width="1.1"/><path d="M292 79.400l5-3.600M285.600 84.800l-2.800 3" stroke="#000" stroke-width="1"/>

<!-- row 3 -->
<use href="#ddArrow" x="98.6" y="106.600" fill="#000" transform="translate(0,0)"/>
<use href="#ddArrow" x="234.500" y="106.600" fill="#a0a0a0"/>
<!-- plane icon -->
<g id="planeIco">
  <path d="M124.700 104.600v8.800M118.200 104l9.800 4.400" stroke="#000" stroke-width="1.2" fill="none"/>
  <path d="M124.700 100v5" stroke="#2a9a38" stroke-width="1.800"/><path d="M124.700 99.200l1.800 2.600h-3.600z" fill="#2a9a38"/>
  <path d="M128 108.400l4.800 2.200" stroke="#c02a20" stroke-width="1.600"/><path d="M133.200 110.900l-3.800.6.600-3.200z" fill="#c02a20"/>
  <path d="M124.400 107.600l-5.600 3.800" stroke="#1818b0" stroke-width="1.600"/><path d="M118 112l1-3.200 2 2.400z" fill="#1818b0"/>
</g>
<!-- new sketch -->
<g stroke="#000" stroke-width="1"><path d="M257.500 99v7M254 102.500h7"/><path d="M255.200 100.200l4.600 4.600M259.800 100.200l-4.600 4.600" stroke-width=".9"/></g>
<path d="M261.400 102.200l6.200-2v9.400l-13.200 4v-5.400l3-1" fill="none" stroke="#18188c" stroke-width="1.200" stroke-linejoin="miter"/>
<rect x="258.600" y="103.600" width="2.600" height="2.600" fill="none" stroke="#18188c" stroke-width="1"/><rect x="262.800" y="104.400" width="3" height="3.400" fill="none" stroke="#18188c" stroke-width="1"/>
<!-- generate lightning -->
<path d="M301 99.200c3.400-1 6.400 .4 6.400 3l-.6 4.400c-.8 3-3 5.200-6 5.800l-3.600-.4 1.400-2.800-2.200-1.200 1.800-2.800-2.400-1z" fill="#f4f410"/>
<path d="M306.800 99.400l-4.800 6.600 4.600-2.200-5 6.400 4.800-2.200-8.200 6.800" stroke="#4a4a08" stroke-width="1.100" fill="none" stroke-linejoin="bevel"/>
<path d="M296 103.400h3.200M297.200 107.400h2.800M297 110h2.400" stroke="#7a7a18" stroke-width="1" fill="none"/>
<!-- share topology -->
<g transform="translate(378.200,101.200)">
  <path d="M.6 3.400L3.400.6h3.400l.8 1.600.8-1.600h3.400l2.800 2.800v4.600L7.400 12 .6 8z" fill="#38dede" stroke="#000" stroke-width="1.100" stroke-linejoin="round"/>
  <path d="M.6 3.400L3.400.6h3.400l.8 1.600.8-1.600h3.400l2.800 2.800-3.600 1.400H4.200z" fill="#4a8a9c" stroke="#000" stroke-width=".9" stroke-linejoin="round"/>
  <path d="M4.200 4.800v5.200M11 4.800V10M7.600 4.800V12" stroke="#000" stroke-width=".9"/>
</g>
<!-- parameters -->
<rect x="501.700" y="100" width="14.800" height="14.200" fill="#fff" stroke="#1a2c6c" stroke-width="1.200"/><rect x="502.300" y="99.600" width="13.600" height="2.200" fill="#2c60cc"/>
<g font-family="Liberation Sans, sans-serif" font-weight="bold" font-size="8.400" fill="#14307c"><text x="509.300" y="108.400">P</text><text x="502.900" y="113.900">P</text></g>
<path d="M503.400 105.400h4M510 111.300h4.200" stroke="#b01828" stroke-width="1.100"/><path d="M508.400 105.400l-2.200-1.800v3.600zM515.200 111.300l-2.200-1.800v3.600z" fill="#b01828"/>

<!-- row 4 -->
<!-- extrude -->
<g transform="translate(15,123)">
  <path d="M.6.600h12.400l1 1v11.800H1.600l-1-1z" fill="#1e8e8e" stroke="#000" stroke-width="1.200" stroke-linejoin="round"/>
  <rect x="3.400" y="3.400" width="8.600" height="8" fill="#2ab8b4" stroke="#000" stroke-width="1.100"/>
  <path d="M5.200 5.400h5.400l4 4v5.200H9.800l-4.600-4.400z" fill="#45dcd4" stroke="#000" stroke-width="1" stroke-linejoin="round"/>
  <path d="M9.800 9.800h4.800M9.800 9.800v4.800M9.800 9.800L5.400 5.600" stroke="#000" stroke-width=".9" fill="none"/>
</g>
<!-- revolve -->
<g transform="translate(90,123)">
  <path d="M.6 13.400V8C.6 2 14.200 2 14.200 8v5.400H9V9c0-2-3.200-2-3.200 0v4.400z" fill="#1e9a9a" stroke="#000" stroke-width="1.100" stroke-linejoin="round"/>
  <rect x="1.200" y="8.400" width="4.200" height="4.600" fill="#48e2d6"/><rect x="9.500" y="8.400" width="4.200" height="4.600" fill="#48e2d6"/>
  <path d="M7.500 .2v15.400" stroke="#000" stroke-width="1.200"/>
</g>
<!-- sweep -->
<g transform="translate(165.600,123)">
  <path d="M3 .4l3.200 2.600c-.4 4 2 6.400 5.800 6.600l3 2.400-3.200 2.400C5.800 14.600.8 9.800.6 3z" fill="#229c9c" stroke="#000" stroke-width="1.100" stroke-linejoin="round"/>
  <path d="M3 .4L.6 3c.4 2 1 3.200 2 4.600" fill="none" stroke="#000" stroke-width="1"/>
  <circle cx="3.300" cy="3.200" r="1.300" fill="#5ee8e0" stroke="#0a5a5a" stroke-width=".6"/><ellipse cx="11.600" cy="11.800" rx="1.800" ry="1.400" fill="#5ee8e0" stroke="#0a5a5a" stroke-width=".6"/>
</g>
<!-- skin/loft -->
<g transform="translate(236,124)">
  <path d="M6.600 .4l2.600 2.800 3.800 6.600-6.400 4.600L.4 9.800l3.600-6.600z" fill="#1e8e8e" stroke="#000" stroke-width="1" stroke-linejoin="round"/>
  <path d="M6.600 .4l2.600 2.800-2.600 2.400-2.600-2.400z" fill="#52e0e0" stroke="#0a4a4a" stroke-width=".6"/>
  <path d="M6.600 5.600v8.800" stroke="#000" stroke-width=".9"/><path d="M6.600 5.600l6.400 4.200-6.400 4.600z" fill="#2ab0b0" stroke="#000" stroke-width=".7" stroke-linejoin="round"/>
</g>
<!-- thin/surface -->
<g transform="translate(332,124)">
  <path d="M.6 .6h10.800l3 3v10H3.600l-3-3z" fill="#4e8484" stroke="#000" stroke-width="1.100" stroke-linejoin="round"/>
  <rect x="3.600" y="3.600" width="10.800" height="10" fill="#1e9a9a" stroke="#000" stroke-width="1.100"/>
  <rect x="5.600" y="5.600" width="6.800" height="6" fill="#13706f" stroke="#000" stroke-width=".8"/>
  <rect x="6.400" y="6.400" width="2.400" height="1.800" fill="#5ee8e0"/><path d="M6.400 10.400h2.600v-1h3v1.800H6.400z" fill="#5ee8e0"/>
</g>
<!-- blend -->
<g transform="translate(435.600,124.400)">
  <path d="M.6 3.600C1.200 1.400 2.400 .6 4.200 .6l3.600.4 5.600 6.600-1.600 1.400-2.400.6-.6 3.600-2.200-.4z" fill="#1fb4b4" stroke="#000" stroke-width="1.100" stroke-linejoin="round"/>
  <path d="M2 2.600l6.600 8" stroke="#0e6e6e" stroke-width=".8"/>
</g>
<use href="#ddArrow" x="491" y="129" fill="#000"/>
<!-- chamfer -->
<path d="M510.600 128l4.200-3.600 9 9.600-4.200 3.600z" fill="#1fb4b4" stroke="#000" stroke-width="1.100" stroke-linejoin="round"/><path d="M512.200 126.600l9 9.600" stroke="#0e6e6e" stroke-width=".7"/>
<!-- slice -->
<g id="sliceIco" transform="translate(588.600,124.200)">
  <path d="M.5 2.400L3.400.6l3 1.200v7L3.600 10.600.5 9z" fill="#2a7a6c" stroke="#000" stroke-width=".9" stroke-linejoin="round"/>
  <path d="M4 3.600L7 1.800l3 1.200v7l-2.800 1.800L4 10.400z" fill="#2a9a8c" stroke="#000" stroke-width=".9" stroke-linejoin="round"/>
  <path d="M7.400 5.200l3.600-2 4 1.600v6l-3.600 2-4-1.600z" fill="#42e2d2" stroke="#000" stroke-width=".9" stroke-linejoin="round"/>
  <path d="M7.400 5.200l4 1.600 3.600-2M11.400 6.800v6" fill="none" stroke="#000" stroke-width=".9"/>
</g>
<!-- point -->
<path d="M662.400 131l7.200-7.600 6 5.400-6.800 8.600z" fill="#2aa4a4" stroke="#000" stroke-width="1.100" stroke-linejoin="round"/>
<path d="M663.400 132.400l5.400 5.600 6.800-8.600" fill="none" stroke="#fff" stroke-width="1.200"/><path d="M662.400 131l6.400 6.400 6.800-8.600" fill="none" stroke="#000" stroke-width=".9"/>
<rect x="666" y="130.400" width="2.400" height="2.400" fill="#7af0e8" stroke="#000" stroke-width=".8"/><rect x="669.600" y="127" width="2.400" height="2.400" fill="#7af0e8" stroke="#000" stroke-width=".8"/>
<!-- conversion -->
<rect x="722.400" y="125.400" width="6.200" height="4.600" fill="#a8206c" stroke="#4a0a30" stroke-width=".8"/><rect x="722.400" y="132.400" width="6.200" height="4.600" fill="#2a7cb4" stroke="#0a2a5a" stroke-width=".8"/>
<path d="M729.600 126.400c5.600 0 7.400 6.800 2 9.400" fill="none" stroke="#d83a1a" stroke-width="1.100"/><path d="M729.600 137l1-3.200 2.400 2.200z" fill="#d83a1a"/>
</svg>
<!-- ===== tree outline icons ===== -->
<svg style="left:0;top:0" width="330" height="340" viewBox="0 0 330 340">
<defs>
  <path id="chk" d="M0 3.400l2.500 3.100L6.800 0" fill="none" stroke="#2c7a32" stroke-width="1.900" stroke-linejoin="miter"/>
  <g id="planeT">
    <path d="M6.600 4.600v9.200M0 4.700l10.400 4.700" stroke="#000" stroke-width="1.200" fill="none"/>
    <path d="M6.600 1.200v4" stroke="#2a9a38" stroke-width="1.800"/><path d="M6.600 0l1.900 2.800H4.700z" fill="#2a9a38"/><circle cx="6.600" cy="3.200" r="1.300" fill="#2a9a38"/>
    <path d="M10 9.200l4.200 1.600" stroke="#c02a20" stroke-width="1.700"/><path d="M15 11.100l-4 .7.800-3.400z" fill="#c02a20"/>
    <path d="M6.300 8l-5 3.200" stroke="#1818b0" stroke-width="1.700"/><path d="M.3 11.900l1.100-3.300 2.100 2.500z" fill="#1818b0"/>
  </g>
</defs>
<!-- connectors -->
<g stroke="#8a8a8a" stroke-width="1" stroke-dasharray="1 1" fill="none">
  <path d="M41.500 187v124"/>
  <path d="M21 177.500h8"/>
  <path d="M42 197.500h14M42 217.500h14M42 237.500h14M42 257.500h14M42 277.500h14M42 297.500h14M48 317.500h8"/>
</g>
<!-- expanders -->
<rect x="9.500" y="172.500" width="10" height="10" fill="#fff" stroke="#848484"/><path d="M11.500 177.500h6" stroke="#000" stroke-width="1.200"/>
<rect x="36.500" y="312.500" width="10" height="10" fill="#fff" stroke="#848484"/><path d="M38.500 317.500h6M41.500 314.500v6" stroke="#000" stroke-width="1.200"/>
<!-- checks -->
<use href="#chk" x="29" y="178.200"/>
<use href="#chk" x="56" y="198.200"/><use href="#chk" x="56" y="218.200"/><use href="#chk" x="56" y="238.200"/>
<use href="#chk" x="56" y="258.200"/><use href="#chk" x="56" y="278.200"/><use href="#chk" x="56" y="298.200"/><use href="#chk" x="56" y="318.200"/>
<!-- root folder icon -->
<g transform="translate(37.300,169.200)">
  <path d="M.6 2.600L2.400.6h4.800l1.400 2h5.600v11.200H.6z" fill="#f6f0a6" stroke="#c9c070" stroke-width=".8"/>
  <path d="M14.400 2.800v11.200H1" fill="none" stroke="#4a4a2a" stroke-width="1"/>
  <path d="M2.600 6.200l4.600-2.400 4.800 2.400v3.800L7.200 12.600 2.600 10z" fill="#6c8ce4" stroke="#000" stroke-width="1.100" stroke-linejoin="round"/>
  <path d="M2.600 6.200l4.600 2.200 4.800-2.200M7.200 8.400v4.200" fill="none" stroke="#000" stroke-width="1"/>
</g>
<!-- planes -->
<use href="#planeT" x="65" y="190"/><use href="#planeT" x="65" y="210"/><use href="#planeT" x="65" y="230"/>
<!-- import -->
<rect x="64.200" y="249.200" width="15.600" height="15.600" rx="2" fill="#1c6a44"/>
<path d="M64.200 259c5-1 10-3 15.600-7v10.800a2 2 0 0 1-2 2H66.200a2 2 0 0 1-2-2z" fill="#165a38"/>
<text x="66.600" y="263.400" font-family="Liberation Serif, serif" font-weight="bold" font-size="16.500" fill="#fff">P</text>
<!-- freeze -->
<g transform="translate(65.800,272.200)" fill="#fff" stroke="#2cb0a8" stroke-width="1.100" stroke-linejoin="round">
  <path d="M.6 2.800L3 .6h6l1.800 2.200v5.600L8.600 10.200H2.400L.6 8z"/>
  <rect x="3.200" y="3.400" width="7.400" height="6.800" rx="1.200"/>
  <path d="M.6 2.800l2.600 1.400M3 .6h6l1.600 3" fill="none"/>
</g>
<!-- slice -->
<use href="#sliceIco" transform="translate(-524.400,166)"/>
<!-- bodies -->
<g transform="translate(64,310.200)">
  <path d="M.5 2.400L4 .5l5 1.700v6.600L5.400 10.600.5 8.600z" fill="#2e6a36" stroke="#143a1a" stroke-width=".9" stroke-linejoin="round"/>
  <path d="M5 5.400l4.800-2.400 5 1.800v5.600L10 12.600l-5-1.800z" fill="#6c8cec" stroke="#10185a" stroke-width="1" stroke-linejoin="round"/>
  <path d="M5 5.400l5 1.800 4.800-2.400-5-1.800z" fill="#9cb4f8" stroke="#10185a" stroke-width=".8" stroke-linejoin="round"/>
  <path d="M10 7.200v5.400" stroke="#10185a" stroke-width="1"/>
</g>
</svg>

<!-- text -->
<span class="t" style="left:21.8px;top:2.5px;font-size:12.5px;color:#000;font-weight:normal;letter-spacing:0.26px">A: Geometry - DesignModeler</span>
<span class="t" style="left:14.6px;top:27.5px;font-size:12.5px;color:#000;font-weight:normal;letter-spacing:-0.69px">File</span>
<span class="t" style="left:44.6px;top:27.5px;font-size:12.5px;color:#000;font-weight:normal;letter-spacing:-0.07px">Create</span>
<span class="t" style="left:93.4px;top:27.5px;font-size:12.5px;color:#000;font-weight:normal;letter-spacing:0.17px">Concept</span>
<span class="t" style="left:152.7px;top:27.5px;font-size:12.5px;color:#000;font-weight:normal;letter-spacing:0.43px">Tools</span>
<span class="t" style="left:195.5px;top:27.5px;font-size:12.5px;color:#000;font-weight:normal;letter-spacing:-0.12px">View</span>
<span class="t" style="left:233.6px;top:27.5px;font-size:12.5px;color:#000;font-weight:normal;letter-spacing:-0.01px">Help</span>
<span class="t" style="left:151.7px;top:51.0px;font-size:12.5px;color:#9a9a9a;font-weight:normal;letter-spacing:0.04px">Undo</span>
<span class="t" style="left:215.0px;top:51.0px;font-size:12.5px;color:#9a9a9a;font-weight:normal;letter-spacing:-0.30px">Redo</span>
<span class="t" style="left:268.3px;top:51.0px;font-size:12.5px;color:#000;font-weight:normal;letter-spacing:-0.30px">Select:</span>
<span class="t" style="left:17.0px;top:100.7px;font-size:11.5px;color:#000;font-weight:normal;letter-spacing:-0.33px">XYPlane</span>
<span class="t" style="left:153.6px;top:100.7px;font-size:11.5px;color:#8a8a8a;font-weight:normal;letter-spacing:0.30px">None</span>
<span class="t" style="left:311.4px;top:99.5px;font-size:12.5px;color:#000;font-weight:normal;letter-spacing:0.04px">Generate</span>
<span class="t" style="left:395.0px;top:99.5px;font-size:12.5px;color:#000;font-weight:normal;letter-spacing:0.46px">Share Topology</span>
<span class="t" style="left:519.6px;top:99.5px;font-size:12.5px;color:#000;font-weight:normal;letter-spacing:0.07px">Parameters</span>
<span class="t" style="left:32.4px;top:123.5px;font-size:12.5px;color:#000;font-weight:normal;letter-spacing:0.08px">Extrude</span>
<span class="t" style="left:107.6px;top:123.5px;font-size:12.5px;color:#000;font-weight:normal;letter-spacing:-0.13px">Revolve</span>
<span class="t" style="left:183.4px;top:123.5px;font-size:12.5px;color:#000;font-weight:normal;letter-spacing:-0.16px">Sweep</span>
<span class="t" style="left:252.4px;top:123.5px;font-size:12.5px;color:#000;font-weight:normal;letter-spacing:0.24px">Skin/Loft</span>
<span class="t" style="left:349.0px;top:123.5px;font-size:12.5px;color:#000;font-weight:normal;letter-spacing:0.10px">Thin/Surface</span>
<span class="t" style="left:452.4px;top:123.5px;font-size:12.5px;color:#000;font-weight:normal;letter-spacing:0.00px">Blend</span>
<span class="t" style="left:527.0px;top:123.5px;font-size:12.5px;color:#000;font-weight:normal;letter-spacing:0.18px">Chamfer</span>
<span class="t" style="left:607.6px;top:123.5px;font-size:12.5px;color:#000;font-weight:normal;letter-spacing:-0.57px">Slice</span>
<span class="t" style="left:679.4px;top:123.5px;font-size:12.5px;color:#000;font-weight:normal;letter-spacing:0.03px">Point</span>
<span class="t" style="left:739.6px;top:123.5px;font-size:12.5px;color:#000;font-weight:normal;letter-spacing:0.11px">Conversion</span>
<span class="t" style="left:4.5px;top:146.5px;font-size:12.5px;color:#46566b;font-weight:normal;letter-spacing:0.20px">Tree Outline</span>
<span class="t" style="left:329.5px;top:146.5px;font-size:12.5px;color:#46566b;font-weight:normal;letter-spacing:0.07px">Graphics</span>
<span class="t" style="left:4.5px;top:678.8px;font-size:12.5px;color:#46566b;font-weight:normal;letter-spacing:0.08px">Details View</span>
<span class="t" style="left:58.7px;top:169.0px;font-size:12.5px;color:#000;font-weight:normal;letter-spacing:0.07px">A: Geometry</span>
<span class="t" style="left:85.4px;top:189.0px;font-size:12.5px;color:#000;font-weight:normal;letter-spacing:-0.58px">XYPlane</span>
<span class="t" style="left:85.4px;top:209.0px;font-size:12.5px;color:#000;font-weight:normal;letter-spacing:-0.46px">ZXPlane</span>
<span class="t" style="left:85.4px;top:229.0px;font-size:12.5px;color:#000;font-weight:normal;letter-spacing:-0.64px">YZPlane</span>
<span class="t" style="left:85.4px;top:249.0px;font-size:12.5px;color:#000;font-weight:normal;letter-spacing:0.63px">Import1</span>
<span class="t" style="left:85.4px;top:269.0px;font-size:12.5px;color:#000;font-weight:normal;letter-spacing:-0.38px">Freeze1</span>
<span class="t" style="left:85.4px;top:289.0px;font-size:12.5px;color:#000;font-weight:normal;letter-spacing:-0.41px">Slice6</span>
<span class="t" style="left:85.4px;top:309.0px;font-size:12.5px;color:#000;font-weight:normal;letter-spacing:0.14px">1 Part, 2 Bodies</span>
<span class="t" style="left:10.0px;top:648.4px;font-size:12.5px;color:#000;font-weight:normal;letter-spacing:-0.45px">Sketching</span>
<span class="t" style="left:74.5px;top:650.0px;font-size:12.5px;color:#000;font-weight:normal;letter-spacing:-0.10px">Modeling</span>
<span class="t" style="left:335.0px;top:961.0px;font-size:12.5px;color:#000;font-weight:normal;letter-spacing:-0.30px">Model View</span>
<span class="t" style="left:409.3px;top:958.7px;font-size:12.5px;color:#000;font-weight:normal;letter-spacing:-0.44px">Print Preview</span>
<span class="t" style="left:38.3px;top:989.7px;font-size:12.5px;color:#000;font-weight:normal;letter-spacing:-0.11px">Ready</span>
<span class="t" style="left:1012.7px;top:989.3px;font-size:12.5px;color:#000;font-weight:normal;letter-spacing:0.18px">No Selection</span>
<span class="t" style="left:1465.8px;top:989.3px;font-size:12.5px;color:#000;font-weight:normal;letter-spacing:0.39px">Millimeter</span>
<span class="t" style="left:1566.6px;top:988.5px;font-size:10px;color:#222;font-weight:normal;letter-spacing:-0.10px">0K/S</span>
<span class="t" style="left:1623.7px;top:988.5px;font-size:10px;color:#222;font-weight:normal;letter-spacing:-0.13px">0K/S</span>
<span class="t" style="left:782.5px;top:882.8px;font-size:12px;color:#000;font-weight:normal;letter-spacing:-0.09px">0.00</span>
<span class="t" style="left:984.0px;top:882.8px;font-size:12px;color:#000;font-weight:normal;letter-spacing:-0.14px">250.00</span>
<span class="t" style="left:1191.4px;top:882.8px;font-size:12px;color:#000;font-weight:normal;letter-spacing:0.26px">500.00 (mm)</span>
<span class="t" style="left:879.6px;top:922.0px;font-size:12px;color:#000;font-weight:normal;letter-spacing:0.04px">125.00</span>
<span class="t" style="left:1087.9px;top:922.0px;font-size:12px;color:#000;font-weight:normal;letter-spacing:0.04px">375.00</span>
</div>
</body>
</html>
